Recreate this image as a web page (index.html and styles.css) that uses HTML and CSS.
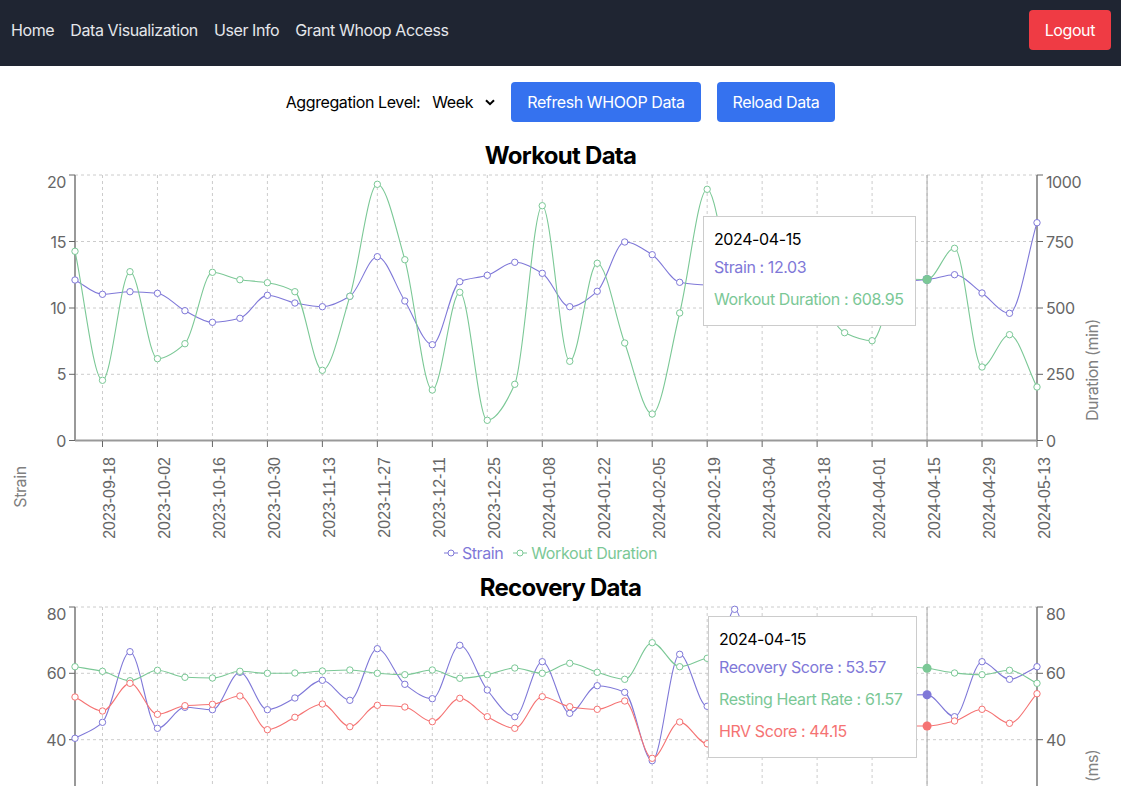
FILE: index.html
```html
<!DOCTYPE html>
<html lang="en">
<head>
    <meta charset="UTF-8">
    <title>Data Visualization</title>
    <link rel="stylesheet" href="styles.css">
</head>
<body>
<nav class="navbar">
    <ul class="nav-links">
        <li><a href="#">Home</a></li>
        <li><a href="#">Data Visualization</a></li>
        <li><a href="#">User Info</a></li>
        <li><a href="#">Grant Whoop Access</a></li>
    </ul>
    <button class="btn btn-red">Logout</button>
</nav>
<div class="controls">
    <label class="agg-label" for="agg">Aggregation Level:</label>
    <div class="agg-select">
        <select id="agg">
            <option>Week</option>
            <option>Day</option>
            <option>Month</option>
        </select>
        <svg class="chevron" width="10" height="7" viewBox="0 0 10 7"><path d="M1 1.2l4 4 4-4" fill="none" stroke="#000" stroke-width="2"/></svg>
    </div>
    <button class="btn btn-blue">Refresh WHOOP Data</button>
    <button class="btn btn-blue">Reload Data</button>
</div>

<h2 class="chart-title">Workout Data</h2>
<div class="chart">
    <svg id="workout" class="chart-svg" width="1121" height="370"></svg>
    <div class="legend">
        <span class="legend-item purple">
            <svg width="14" height="14" viewBox="0 0 14 14"><path d="M0 7h4M10 7h4" stroke="currentColor"/><circle cx="7" cy="7" r="3" fill="#fff" stroke="currentColor"/></svg>
            Strain
        </span>
        <span class="legend-item green">
            <svg width="14" height="14" viewBox="0 0 14 14"><path d="M0 7h4M10 7h4" stroke="currentColor"/><circle cx="7" cy="7" r="3" fill="#fff" stroke="currentColor"/></svg>
            Workout Duration
        </span>
    </div>
    <div class="tooltip tooltip-workout">
        <p class="tooltip-date">2024-04-15</p>
        <p class="tooltip-row purple">Strain : 12.03</p>
        <p class="tooltip-row green">Workout Duration : 608.95</p>
    </div>
</div>

<h2 class="chart-title">Recovery Data</h2>
<div class="chart">
    <svg id="recovery" class="chart-svg" width="1121" height="183"></svg>
    <div class="tooltip tooltip-recovery">
        <p class="tooltip-date">2024-04-15</p>
        <p class="tooltip-row purple">Recovery Score : 53.57</p>
        <p class="tooltip-row green">Resting Heart Rate : 61.57</p>
        <p class="tooltip-row red">HRV Score : 44.15</p>
    </div>
</div>
<script src="chart.js"></script>
</body>
</html>
```
FILE: styles.css
```css
*{
    margin: 0;
    padding: 0;
    box-sizing: border-box;
    list-style: none;
}
html,body{
    height: 100%;
    overflow: hidden;
}
body{
    background: #fff;
    color: #000;
    font-family: Inter, "Liberation Sans", sans-serif;
    font-size: 16px;
    font-feature-settings: "calt" 0;
    letter-spacing: -0.025em;
    line-height: 24px;
}
.navbar{
    display: flex;
    justify-content: space-between;
    align-items: center;
    height: 66px;
    padding: 0 10px 6px 11px;
    background: #1f2532;
}
.nav-links{
    display: flex;
    gap: 16px;
}
.nav-links a{
    color: #e5e7eb;
    text-decoration: none;
}
.btn{
    height: 40px;
    padding: 0 16px;
    border: none;
    border-radius: 4px;
    color: #fff;
    font: inherit;
    letter-spacing: inherit;
}
.btn-red{
    background: #ef3b44;
}
.btn-blue{
    background: #3572ef;
}
.controls{
    display: flex;
    justify-content: center;
    align-items: center;
    gap: 16px;
    height: 40px;
    margin-top: 16px;
}
.agg-label{
    margin-right: -4px;
}
.agg-select{
    display: flex;
    align-items: center;
    width: 63px;
}
.agg-select select{
    width: 63px;
    border: none;
    background: none;
    color: #000;
    font: inherit;
    letter-spacing: inherit;
    appearance: none;
    -webkit-appearance: none;
}
.chevron{
    flex: none;
    margin-left: -9px;
    pointer-events: none;
}
.chart-title{
    height: 32px;
    margin-top: 17px;
    padding-top: 1px;
    font-size: 24px;
    font-weight: 700;
    letter-spacing: -0.03em;
    line-height: 32px;
    text-align: center;
}
.chart{
    position: relative;
    height: 400px;
}
.chart + .chart-title{
    margin-top: 0;
}
.chart-svg{
    display: block;
}
.chart-svg text{
    font-family: Inter, "Liberation Sans", sans-serif;
    font-size: 16px;
}
.chart-svg .tick-label{
    fill: #666;
}
.chart-svg .date-label{
    fill: #666;
    font-family: "Liberation Sans", sans-serif;
    letter-spacing: 0;
}
.chart-svg .axis-label{
    fill: #808080;
}
.legend{
    display: flex;
    justify-content: center;
    gap: 10px;
    padding-right: 20px;
}
.legend-item{
    display: flex;
    align-items: center;
    gap: 4px;
}
.purple{
    color: #7f78d8;
}
.green{
    color: #7bc896;
}
.red{
    color: #f57373;
}
.tooltip{
    position: absolute;
    padding: 10px;
    border: 1px solid #ccc;
    background: #fff;
    white-space: nowrap;
}
.tooltip-workout{
    top: 45px;
    left: 703px;
    width: 213px;
}
.tooltip-recovery{
    top: 13px;
    left: 708px;
    width: 209px;
}
.tooltip-row{
    padding: 4px 0;
}
```
FILE: chart.js
```js
var SVG_NS = 'http://www.w3.org/2000/svg';
var LEFT = 75;
var RIGHT = 1037;
var STEP = (RIGHT - LEFT) / 35;
var ACTIVE = 31;
var PURPLE = '#7f78d8';
var GREEN = '#7bc896';
var RED = '#f57373';
var DATES = ['2023-09-18','2023-10-02','2023-10-16','2023-10-30','2023-11-13','2023-11-27','2023-12-11','2023-12-25','2024-01-08','2024-01-22','2024-02-05','2024-02-19','2024-03-04','2024-03-18','2024-04-01','2024-04-15','2024-04-29','2024-05-13'];

function add(svg, name, attrs, text){
    var el = document.createElementNS(SVG_NS, name);
    for(var k in attrs){
        el.setAttribute(k, attrs[k]);
    }
    if(text !== undefined){
        el.textContent = text;
    }
    svg.appendChild(el);
    return el;
}

function pointX(i){
    return LEFT + i * STEP;
}

// same curve as a monotone x line chart
function curve(ys){
    var n = ys.length;
    var d = [];
    var m = [];
    var i;
    for(i = 0; i < n - 1; i++){
        d[i] = (ys[i + 1] - ys[i]) / STEP;
    }
    for(i = 1; i < n - 1; i++){
        m[i] = d[i - 1] * d[i] <= 0 ? 0 : 2 * d[i - 1] * d[i] / (d[i - 1] + d[i]);
    }
    m[0] = d[0];
    m[n - 1] = d[n - 2];
    var path = 'M' + pointX(0) + ' ' + ys[0];
    for(i = 0; i < n - 1; i++){
        var c = STEP / 3;
        path += 'C' + (pointX(i) + c) + ' ' + (ys[i] + m[i] * c) + ' ' + (pointX(i + 1) - c) + ' ' + (ys[i + 1] - m[i + 1] * c) + ' ' + pointX(i + 1) + ' ' + ys[i + 1];
    }
    return path;
}

function drawGrid(svg, rows, bottom){
    var i;
    for(i = 0; i < rows.length; i++){
        add(svg, 'line', {x1: LEFT, x2: RIGHT, y1: rows[i], y2: rows[i], stroke: '#ccc', 'stroke-dasharray': '3 3'});
    }
    for(i = 1; i < 36; i += 2){
        add(svg, 'line', {x1: pointX(i), x2: pointX(i), y1: rows[0], y2: bottom, stroke: '#ccc', 'stroke-dasharray': '3 3'});
    }
}

function drawAxes(svg, top, bottom, ticks){
    add(svg, 'line', {x1: LEFT, x2: LEFT, y1: top, y2: bottom, stroke: '#999', 'stroke-width': 2});
    add(svg, 'line', {x1: RIGHT, x2: RIGHT, y1: top, y2: bottom, stroke: '#999', 'stroke-width': 2});
    for(var i = 0; i < ticks.length; i++){
        var t = ticks[i];
        var dy = i == 0 ? 13 : 6;
        add(svg, 'line', {x1: LEFT - 6, x2: LEFT, y1: t.y, y2: t.y, stroke: '#666'});
        add(svg, 'line', {x1: RIGHT, x2: RIGHT + 6, y1: t.y, y2: t.y, stroke: '#666'});
        add(svg, 'text', {x: LEFT - 9, y: t.y + dy, 'text-anchor': 'end', 'class': 'tick-label'}, t.left);
        add(svg, 'text', {x: RIGHT + 9, y: t.y + dy, 'class': 'tick-label'}, t.right);
    }
}

function drawLine(svg, ys, color){
    add(svg, 'path', {d: curve(ys), fill: 'none', stroke: color, 'stroke-width': 1.1});
    for(var i = 0; i < ys.length; i++){
        if(i != ACTIVE){
            add(svg, 'circle', {cx: pointX(i), cy: ys[i], r: 3.2, fill: '#fff', stroke: color});
        }
    }
}

function drawActive(svg, top, bottom, series){
    var x = pointX(ACTIVE);
    add(svg, 'line', {x1: x, x2: x, y1: top, y2: bottom, stroke: '#aaa'});
    return function(){
        for(var i = 0; i < series.length; i++){
            add(svg, 'circle', {cx: x, cy: series[i][0][ACTIVE], r: 4.5, fill: series[i][1]});
        }
    };
}

/* the svg starts 171px down the page, all y values below are page y */
function workout(){
    var svg = document.getElementById('workout');
    var g = add(svg, 'g', {transform: 'translate(0,-171)'});
    var strain = [280,294.3,291.7,293.3,310.7,322.3,318.3,295.3,303,306.7,296.3,256.7,301,344.7,281.7,275.3,262.3,273.3,306.7,291.3,242,254.7,282.3,285,284,283,282,281,281,281,281,279.5,274.7,293,313.3,222.7];
    var duration = [251.3,380.3,271.7,358.7,343.7,272.3,279.7,282.7,291.7,370.3,296.3,184.3,259.7,390,292.3,420.3,384.3,205.7,361.3,263.3,343,414,313,189.3,280,270,290,300,332.7,340.7,279,279.5,248.3,367,334.7,387];
    var series = [[strain, PURPLE], [duration, GREEN]];
    drawGrid(g, [175,241.5,308,374.3], 440.5);
    var dots = drawActive(g, 175, 440.5, series);
    drawAxes(g, 175, 440.5, [
        {y: 175, left: '20', right: '1000'},
        {y: 241.5, left: '15', right: '750'},
        {y: 308, left: '10', right: '500'},
        {y: 374.3, left: '5', right: '250'},
        {y: 440.5, left: '0', right: '0'}
    ]);
    add(g, 'line', {x1: LEFT, x2: RIGHT, y1: 440.5, y2: 440.5, stroke: '#999', 'stroke-width': 2});
    for(var i = 0; i < DATES.length; i++){
        var x = pointX(2 * i + 1);
        add(g, 'line', {x1: x, x2: x, y1: 441, y2: 447, stroke: '#666'});
        add(g, 'text', {transform: 'translate(' + (x + 13) + ',457) rotate(-90)', 'text-anchor': 'end', 'class': 'date-label'}, DATES[i]);
    }
    add(g, 'text', {transform: 'translate(26,487) rotate(-90)', 'text-anchor': 'middle', 'class': 'axis-label'}, 'Strain');
    add(g, 'text', {transform: 'translate(1098,370) rotate(-90)', 'text-anchor': 'middle', 'class': 'axis-label'}, 'Duration (min)');
    drawLine(g, strain, PURPLE);
    drawLine(g, duration, GREEN);
    dots();
}

function recovery(){
    var svg = document.getElementById('recovery');
    var g = add(svg, 'g', {transform: 'translate(0,-603)'});
    var score = [738.3,722.3,651.7,728.3,707.3,709.7,672.3,709.7,698,680.3,700.3,648.7,684.3,698.7,645.3,690,716.7,661.7,713.3,685.7,692.3,760.7,654.3,706.3,609.3,700,700,695,700,690,695,694.7,716.7,661.7,679.3,666.7];
    var rest = [666.7,671.3,680.7,670.3,677.3,678,671.3,673.3,673,671,670,673.3,674.7,670,678.3,674.7,668,673.3,663.3,672.3,679.3,642.7,666.7,658.3,655,660,665,660,665,660,666,668.3,673,674.7,670.3,683.3];
    var hrv = [697,711,683.3,714.3,705.7,704.3,696,729.7,717.3,704,726.7,705.3,707,721.7,698.3,716.7,728.3,696.7,706.7,709.3,701,758.3,722,743.7,725,730,720,725,730,725,726,726,721,709.3,723.3,693.7];
    var series = [[score, PURPLE], [rest, GREEN], [hrv, RED]];
    drawGrid(g, [607,673.3,739.7], 790);
    var dots = drawActive(g, 607, 790, series);
    drawAxes(g, 607, 790, [
        {y: 607, left: '80', right: '80'},
        {y: 673.3, left: '60', right: '60'},
        {y: 739.7, left: '40', right: '40'}
    ]);
    add(g, 'text', {transform: 'translate(1098,782) rotate(-90)', 'class': 'axis-label'}, '(ms)');
    drawLine(g, score, PURPLE);
    drawLine(g, rest, GREEN);
    drawLine(g, hrv, RED);
    dots();
}

workout();
recovery();
```
